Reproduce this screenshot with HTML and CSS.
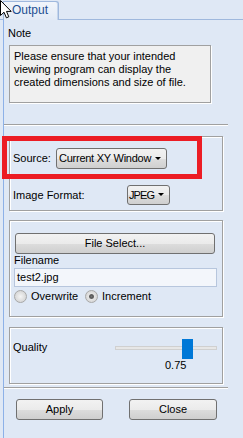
FILE: index.html
```html
<!DOCTYPE html>
<html>
<head>
<meta charset="utf-8">
<link rel="stylesheet" href="styles.css">
</head>
<body>
<div class="tabbar"><div class="tab">Output</div></div>
<div class="panel">
  <div class="note-label">Note</div>
  <div class="note-box">Please ensure that your intended viewing program can display the created dimensions and size of file.</div>
  <div class="sep"></div>
  <div class="group source-group">
    <div class="row row-source">
      <span class="lbl lbl-source">Source:</span>
      <span class="select select-source">Current XY Window<i class="caret"></i></span>
    </div>
    <div class="row row-format">
      <span class="lbl lbl-format">Image Format:</span>
      <span class="select select-format">JPEG<i class="caret"></i></span>
    </div>
  </div>
  <div class="group file-group">
    <div class="btn btn-file">File Select...</div>
    <div class="lbl-filename">Filename</div>
    <div class="input">test2.jpg</div>
    <div class="radios">
      <span class="radio"></span><span class="radio-lbl">Overwrite</span>
      <span class="radio checked"></span><span class="radio-lbl">Increment</span>
    </div>
  </div>
  <div class="group quality-group">
    <div class="quality-row">
      <span class="lbl">Quality</span>
      <div class="slider">
        <div class="track"></div>
        <div class="thumb"></div>
      </div>
    </div>
    <div class="value">0.75</div>
  </div>
  <div class="sep sep2"></div>
  <div class="actions">
    <div class="btn btn-apply">Apply</div>
    <div class="btn btn-close">Close</div>
  </div>
</div>
<div class="highlight"></div>
<svg class="cursor" width="14" height="20" viewBox="0 0 14 20"><path d="M0.5 0.5 L0.5 15.5 L4 12.2 L6.4 17.8 L8.8 16.8 L6.5 11.4 L11.2 11.4 Z" fill="#fff" stroke="#000" stroke-width="1" stroke-linejoin="miter"/></svg>
</body>
</html>
```
FILE: styles.css
```css
html, body {
  margin: 0;
  padding: 0;
}
body {
  width: 243px;
  height: 438px;
  overflow: hidden;
  background: #dfe8f5;
  font-family: "Liberation Sans", Arial, sans-serif;
  font-size: 11px;
  line-height: 13px;
  color: #000;
  position: relative;
}
.tabbar {
  height: 19px;
  border-bottom: 1px solid #9fb8dd;
  display: flex;
  padding-left: 3px;
}
.tab {
  box-sizing: border-box;
  width: 56px;
  height: 19px;
  margin-top: 1px;
  border: 1px solid #9fb8dd;
  border-bottom: none;
  border-radius: 0 3px 0 0;
  background: linear-gradient(#f1f5fb, #e2eaf6);
  color: #1d4f91;
  font-size: 12px;
  line-height: 17px;
  padding-left: 8px;
  box-shadow: inset -1px 0 0 #c5d5ec;
}
.panel {
  margin-left: 3px;
  border-left: 1px solid #8db1e8;
  padding-left: 5px;
  height: 418px;
  box-sizing: border-box;
}
.note-label {
  padding-top: 7px;
  margin-left: -1px;
}
.note-box {
  box-sizing: border-box;
  margin-top: 5px;
  width: 202px;
  height: 58px;
  border: 1px solid #a0a0a0;
  box-shadow: 1px 1px 0 #fff;
  background: #f0f0f0;
  padding: 4px 8px 0 4px;
}
.sep {
  margin-top: 21px;
  margin-left: -5px;
  width: 224px;
  height: 0;
  border-top: 1px solid #a0a0a0;
  border-bottom: 1px solid #fff;
}
.group {
  box-sizing: border-box;
  width: 214px;
  border: 1px solid #a0a0a0;
  box-shadow: inset 1px 1px 0 #fff, 1px 1px 0 #fff;
}
.source-group {
  margin-top: 10px;
  height: 75px;
  padding: 11px 0 0 3px;
}
.row {
  display: flex;
  align-items: center;
}
.row-format {
  margin-top: 16px;
}
.lbl-source { width: 43px; }
.lbl-format { width: 114px; }
.select {
  box-sizing: border-box;
  position: relative;
  height: 21px;
  border: 1px solid #707070;
  border-radius: 3px;
  background: linear-gradient(#f2f2f2 0%, #ebebeb 50%, #dddddd 51%, #cfcfcf 100%);
  line-height: 19px;
  padding-left: 2px;
  letter-spacing: -0.25px;
}
.select-source { width: 111px; }
.select-format { width: 43px; height: 20px; line-height: 18px; letter-spacing: -0.9px; padding-left: 1px; }
.caret {
  position: absolute;
  right: 5px;
  top: 8px;
  width: 0;
  height: 0;
  border-left: 3px solid transparent;
  border-right: 3px solid transparent;
  border-top: 3px solid #000;
}
.select-format .caret { top: 7px; }
.file-group {
  margin-top: 9px;
  height: 97px;
  padding: 12px 0 0 4px;
}
.btn {
  box-sizing: border-box;
  height: 21px;
  border: 1px solid #707070;
  border-radius: 3px;
  background: linear-gradient(#f2f2f2 0%, #ebebeb 50%, #dddddd 51%, #cfcfcf 100%);
  text-align: center;
  line-height: 19px;
}
.btn-file {
  width: 200px;
  margin-left: 1px;
}
.lbl-filename {
  margin-top: 0;
}
.input {
  box-sizing: border-box;
  margin-top: 1px;
  width: 203px;
  height: 19px;
  border: 1px solid #b7c6dd;
  background: #f3f6fb;
  padding-left: 2px;
  line-height: 17px;
}
.radios {
  margin-top: 3px;
  display: flex;
  align-items: center;
  height: 13px;
}
.radio {
  box-sizing: border-box;
  width: 13px;
  height: 13px;
  border-radius: 50%;
  border: 1px solid #a8a8a8;
  background: radial-gradient(circle at 50% 50%, #f4f4f4 0%, #dcdcdc 60%, #cfcfcf 100%);
  position: relative;
}
.radio.checked::after {
  content: "";
  position: absolute;
  left: 3px;
  top: 3px;
  width: 5px;
  height: 5px;
  border-radius: 50%;
  background: radial-gradient(circle, #777 0%, #555 50%, #999 100%);
}
.radio-lbl {
  margin-left: 4px;
  margin-right: 7px;
}
.quality-group {
  margin-top: 10px;
  height: 57px;
  padding: 11px 0 0 3px;
}
.quality-row {
  display: flex;
  align-items: center;
  height: 20px;
}
.quality-row .lbl {
  width: 102px;
  margin-top: -4px;
}
.slider {
  position: relative;
  width: 102px;
  height: 20px;
}
.track {
  box-sizing: border-box;
  margin-top: 7px;
  height: 4px;
  border: 1px solid #d0d0d0;
  background: #e7e7e7;
}
.thumb {
  position: absolute;
  left: 67px;
  top: 0;
  width: 11px;
  height: 20px;
  background: #0078d7;
}
.value {
  margin-left: 152px;
  margin-top: 0;
}
.sep2 {
  margin-top: 3px;
}
.actions {
  margin-top: 10px;
  display: flex;
  padding-left: 7px;
  gap: 26px;
}
.btn-apply { width: 87px; }
.btn-close { width: 88px; }
.highlight {
  position: absolute;
  left: 2px;
  top: 136px;
  width: 200px;
  height: 43px;
  box-sizing: border-box;
  border: 5px solid #ec1c24;
}
.cursor {
  position: absolute;
  left: 0;
  top: 0;
}
```
